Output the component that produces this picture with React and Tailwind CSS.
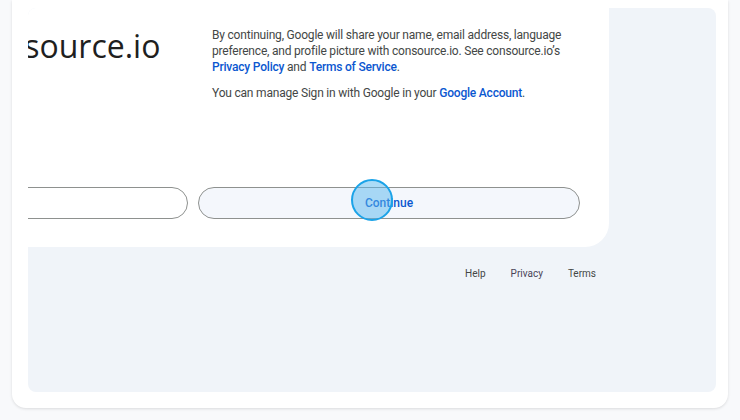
export default function App() {
  const font = { fontFamily: "Roboto, 'Noto Sans', Arial, sans-serif" };
  return (
    <div className="w-[740px] h-[420px] bg-[#f8f9fb] overflow-hidden" style={font}>
      <div className="relative ml-[12px] w-[716px] h-[408px] bg-white rounded-b-[14px] shadow-[0_1px_3px_rgba(0,0,0,0.12)] pt-[8px] pl-[16px] pr-[12px]">
        <div className="w-[688px] h-[384px] bg-[#f0f4f9] rounded-[8px] overflow-hidden">
          <div className="w-[581px] h-[239px] bg-white rounded-br-[24px] overflow-hidden pt-[19px] flex flex-col">
            <div className="flex h-[74px]">
              <div className="w-[184px] shrink-0 -mt-[1px]">
                <div className="ml-[-58px] whitespace-nowrap text-[32px] leading-[40px] text-[#1f1f1f] font-['Open_Sans',sans-serif]">
                  consource.io
                </div>
              </div>
              <div className="w-[380px] shrink-0 text-[12px] leading-[16px] tracking-[-0.2px] text-[#444746] whitespace-nowrap">
                <p>
                  By continuing, Google will share your name, email address, language
                  <br />
                  preference, and profile picture with consource.io. See consource.io’s
                  <br />
                  <span className="text-[#0b57d0] font-medium">Privacy Policy</span> and{" "}
                  <span className="text-[#0b57d0] font-medium">Terms of Service</span>.
                </p>
                <p className="mt-[10px]">
                  You can manage Sign in with Google in your{" "}
                  <span className="text-[#0b57d0] font-medium">Google Account</span>.
                </p>
              </div>
            </div>
            <div className="mt-[86px] flex justify-end gap-[10px] pr-[29px]">
              <div className="w-[382px] h-[32px] shrink-0 rounded-full border border-[#8e918f] bg-white"></div>
              <div className="w-[382px] h-[32px] shrink-0 rounded-full border border-[#8e918f] bg-[#f4f7fc] flex items-center justify-center text-[12px] font-medium text-[#0b57d0]">
                Continue
              </div>
            </div>
          </div>
          <div className="w-[581px] mt-[20px] pr-[13px] flex justify-end gap-[25px] text-[10px] leading-[14px] text-[#444746]">
            <span>Help</span>
            <span className="text-[#4a4458]">Privacy</span>
            <span>Terms</span>
          </div>
        </div>
        <div className="absolute left-[339px] top-[179px] w-[42px] h-[42px] rounded-full border-2 border-[#1ba3e8] bg-[#5ab8ee]/50"></div>
      </div>
    </div>
  );
}
